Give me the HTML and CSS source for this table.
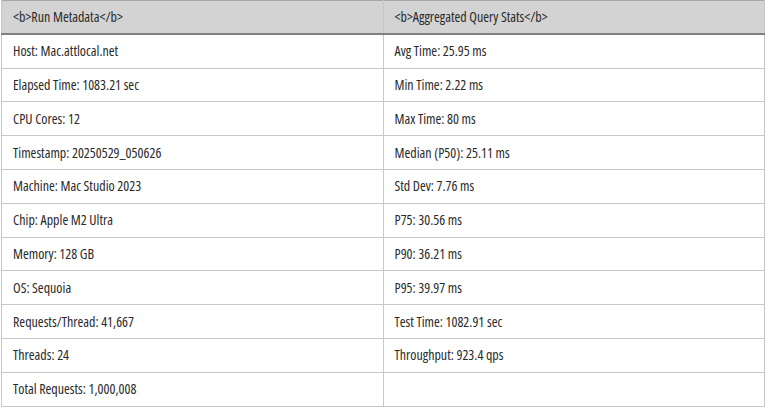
FILE: index.html
```html
<!DOCTYPE html>
<html>
<head>
<meta charset="utf-8">
<link rel="stylesheet" href="styles.css">
</head>
<body>
<table class="stats">
  <thead>
    <tr><th>&lt;b&gt;Run Metadata&lt;/b&gt;</th><th>&lt;b&gt;Aggregated Query Stats&lt;/b&gt;</th></tr>
  </thead>
  <tbody>
    <tr><td>Host: Mac.attlocal.net</td><td>Avg Time: 25.95 ms</td></tr>
    <tr><td>Elapsed Time: 1083.21 sec</td><td>Min Time: 2.22 ms</td></tr>
    <tr><td>CPU Cores: 12</td><td>Max Time: 80 ms</td></tr>
    <tr><td>Timestamp: 20250529_050626</td><td>Median (P50): 25.11 ms</td></tr>
    <tr><td>Machine: Mac Studio 2023</td><td>Std Dev: 7.76 ms</td></tr>
    <tr><td>Chip: Apple M2 Ultra</td><td>P75: 30.56 ms</td></tr>
    <tr><td>Memory: 128 GB</td><td>P90: 36.21 ms</td></tr>
    <tr><td>OS: Sequoia</td><td>P95: 39.97 ms</td></tr>
    <tr><td>Requests/Thread: 41,667</td><td>Test Time: 1082.91 sec</td></tr>
    <tr><td>Threads: 24</td><td>Throughput: 923.4 qps</td></tr>
    <tr><td>Total Requests: 1,000,008</td><td></td></tr>
  </tbody>
</table>
</body>
</html>
```

FILE: styles.css
```css
html, body {
  margin: 0;
  padding: 0;
  background: #ffffff;
}
body {
  padding: 0 3px 0 1px;
  font-family: "Open Sans", "Liberation Sans", sans-serif;
  font-stretch: 75%;
  font-size: 14px;
  color: #2a2a2a;
}
.stats {
  width: 764px;
  border-collapse: collapse;
  table-layout: fixed;
  border: 1px solid #a8a8a8;
}
.stats th, .stats td {
  width: 50%;
  height: 33.8px;
  padding: 0 11px;
  text-align: left;
  font-weight: normal;
  line-height: 1;
  border: 1px solid #c8c8c8;
  box-sizing: border-box;
}
.stats th {
  background: #d3d3d3;
  border-bottom: 2px solid #808080;
  border-top: none;
}
```
